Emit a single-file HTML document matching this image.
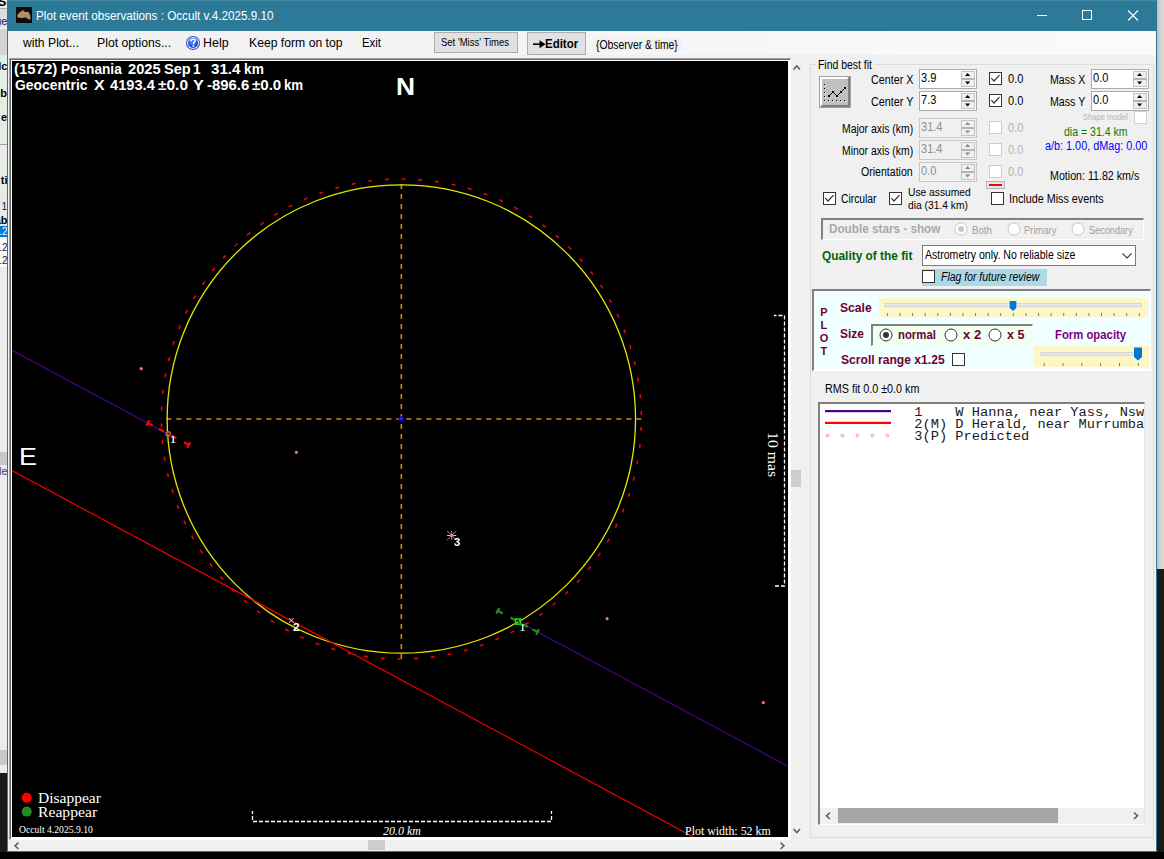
<!DOCTYPE html><html><head><meta charset="utf-8"><style>
html,body{margin:0;padding:0;width:1164px;height:859px;overflow:hidden;background:#111;position:relative}
div{box-sizing:border-box}
</style></head><body>
<div style="position:absolute;left:1157px;top:0px;width:7px;height:569px;background:linear-gradient(90deg,#bcb6b6 0px,#cecece 2px,#dadada 7px)"></div>
<div style="position:absolute;left:1157px;top:569px;width:7px;height:290px;background:#1a1a1a"></div>
<div style="position:absolute;left:0;top:0;width:7px;height:859px;overflow:hidden;background:#ececec">
<div style="position:absolute;left:0px;top:0px;width:7px;height:8px;background:#e8eee8"></div>
<div style="position:absolute;left:0px;top:8px;width:7px;height:1px;background:#a8a8a8"></div>
<div style="position:absolute;left:0px;top:9px;width:7px;height:18px;background:#dedede"></div>
<div style="position:absolute;left:0px;top:29px;width:7px;height:26px;background:#d4d4d4"></div>
<div style="position:absolute;left:0px;top:55px;width:7px;height:89px;background:#e4ece4"></div>
<div style="position:absolute;left:0px;top:144px;width:7px;height:1px;background:#a0a0a0"></div>
<div style="position:absolute;left:0px;top:158px;width:7px;height:35px;background:#e4ece4"></div>
<div style="position:absolute;left:0px;top:193px;width:7px;height:34px;background:#e8e8e8"></div>
<div style="position:absolute;left:0px;top:226px;width:7px;height:11px;background:#0078d7"></div>
<div style="position:absolute;left:0px;top:237px;width:7px;height:30px;background:#fafafa"></div>
<div style="position:absolute;left:0px;top:452px;width:7px;height:13px;background:#c8c8c8"></div>
<div style="position:absolute;left:0px;top:750px;width:7px;height:15px;background:#c8c8c8"></div>
<div style="position:absolute;left:0px;top:773px;width:7px;height:86px;background:#1a1a1a"></div>
<div style="position:absolute;right:0.5px;top:-5px;font:bold 13px/1 'Liberation Sans',sans-serif;color:#000;white-space:pre">S</div>
<div style="position:absolute;right:-0.5px;top:16px;font:normal 11px/1 'Liberation Sans',sans-serif;color:#1a2050;white-space:pre">ue</div>
<div style="position:absolute;right:-0.5px;top:61px;font:bold 11px/1 'Liberation Sans',sans-serif;color:#000;white-space:pre">lc</div>
<div style="position:absolute;right:0px;top:88px;font:bold 11px/1 'Liberation Sans',sans-serif;color:#000;white-space:pre">b</div>
<div style="position:absolute;right:0px;top:112px;font:bold 11px/1 'Liberation Sans',sans-serif;color:#000;white-space:pre">e</div>
<div style="position:absolute;right:-0.5px;top:175px;font:bold 11px/1 'Liberation Sans',sans-serif;color:#000;white-space:pre">ti</div>
<div style="position:absolute;right:0px;top:202px;font:normal 10px/1 'Liberation Sans',sans-serif;color:#1a2050;white-space:pre">1</div>
<div style="position:absolute;right:-0.5px;top:215px;font:bold 11px/1 'Liberation Sans',sans-serif;color:#000;white-space:pre">ab</div>
<div style="position:absolute;right:-0.5px;top:227px;font:normal 10px/1 'Liberation Sans',sans-serif;color:#fff;white-space:pre">.2</div>
<div style="position:absolute;right:-0.5px;top:243px;font:normal 10px/1 'Liberation Sans',sans-serif;color:#1a2050;white-space:pre">.2</div>
<div style="position:absolute;right:-0.5px;top:256px;font:normal 10px/1 'Liberation Sans',sans-serif;color:#1a2050;white-space:pre">.2</div>
<div style="position:absolute;right:-0.5px;top:466px;font:normal 11px/1 'Liberation Sans',sans-serif;color:#404060;white-space:pre">le</div>
</div>
<div style="position:absolute;left:0px;top:852px;width:1164px;height:7px;background:#000"></div>
<div style="position:absolute;left:7px;top:0px;width:1150px;height:852px;background:#f0f0f0;border:1px solid #2e7a98;border-top:none"></div>
<div style="position:absolute;left:7px;top:0px;width:1150px;height:31px;background:#2d7a98"></div>
<div style="position:absolute;left:7px;top:0px;width:1150px;height:1px;background:#4489a3"></div>
<svg style="position:absolute;left:16px;top:7px" width="16" height="16" viewBox="0 0 16 16">
<rect width="16" height="16" fill="#0e0c08"/>
<path d="M1.1 9.1 C1.5 7 3.5 5 5.5 4.2 C6 3.4 7.2 3.0 7.8 3.8 C8.3 4.6 8.8 5.2 9.3 5.1 C10 4.6 11 4.4 12 5 C13.3 5.8 14.3 8 14.5 10.5 C14.6 12 14.2 12.8 13.6 12.7 C12.6 12.5 11.4 11.5 10.3 10.8 C9.4 10.4 8.2 10.6 6.8 10.9 C5 11.2 3.2 11.1 2.2 10.6 C1.4 10.2 1.0 9.7 1.1 9.1 Z" fill="#b09068"/>
</svg>
<div style="position:absolute;left:36.03px;top:10.00px;font:normal normal 12px/1 'Liberation Sans',sans-serif;color:#fff;white-space:pre;transform:scaleX(0.9734);transform-origin:0 0;">Plot event observations : Occult v.4.2025.9.10</div>
<svg style="position:absolute;left:1030px;top:5px" width="120" height="22" viewBox="1030 5 120 22">
<line x1="1037" y1="15.5" x2="1047" y2="15.5" stroke="#fff" stroke-width="1"/>
<rect x="1082.5" y="10.5" width="9" height="9" fill="none" stroke="#fff" stroke-width="1"/>
<path d="M1128 10.5 L1138 20.5 M1138 10.5 L1128 20.5" stroke="#fff" stroke-width="1.1"/>
</svg>
<div style="position:absolute;left:8px;top:31px;width:1148px;height:24px;background:linear-gradient(90deg,#f0f0f0 0%,#f4f4f4 40%,#fafafa 100%)"></div>
<div style="position:absolute;left:23.00px;top:37.00px;font:normal normal 12px/1 'Liberation Sans',sans-serif;color:#000;white-space:pre;transform:scaleX(1.0138);transform-origin:0 0;">with Plot...</div>
<div style="position:absolute;left:96.98px;top:37.00px;font:normal normal 12px/1 'Liberation Sans',sans-serif;color:#000;white-space:pre;transform:scaleX(1.0195);transform-origin:0 0;">Plot options...</div>
<svg style="position:absolute;left:185px;top:35px" width="16" height="16" viewBox="0 0 16 16">
<defs><radialGradient id="hg" cx="0.4" cy="0.35" r="0.7"><stop offset="0" stop-color="#5a8cff"/><stop offset="1" stop-color="#0a3cc8"/></radialGradient></defs>
<circle cx="8" cy="8" r="7" fill="#2a56c0"/>
<circle cx="8" cy="8" r="6" fill="#dfe8ff"/>
<circle cx="8" cy="8" r="5" fill="url(#hg)"/>
<path d="M5.9 6.2 C5.9 4.6 7.2 4.2 8.2 4.2 C9.6 4.2 10.3 5.2 10.1 6.2 C9.9 7.3 8.5 7.6 8.4 9.2" fill="none" stroke="#fff" stroke-width="1.5"/>
<rect x="7.6" y="10.2" width="1.6" height="1.6" fill="#fff"/>
</svg>
<div style="position:absolute;left:203.46px;top:37.00px;font:normal normal 12px/1 'Liberation Sans',sans-serif;color:#000;white-space:pre;transform:scaleX(1.0350);transform-origin:0 0;">Help</div>
<div style="position:absolute;left:249.48px;top:37.00px;font:normal normal 12px/1 'Liberation Sans',sans-serif;color:#000;white-space:pre;transform:scaleX(1.0159);transform-origin:0 0;">Keep form on top</div>
<div style="position:absolute;left:361.55px;top:37.00px;font:normal normal 12px/1 'Liberation Sans',sans-serif;color:#000;white-space:pre;transform:scaleX(0.9505);transform-origin:0 0;">Exit</div>
<div style="position:absolute;left:434px;top:32px;width:84px;height:21px;background:#e1e1e1;border:1px solid #adadad"></div>
<div style="position:absolute;left:440.67px;top:37.00px;font:normal normal 11px/1 'Liberation Sans',sans-serif;color:#000;white-space:pre;transform:scaleX(0.8629);transform-origin:0 0;">Set 'Miss' Times</div>
<div style="position:absolute;left:527px;top:32px;width:59px;height:23px;background:#e1e1e1;border:1px solid #adadad"></div>
<div style="position:absolute;left:545.23px;top:37.00px;font:normal bold 13px/1 'Liberation Sans',sans-serif;color:#000;white-space:pre;transform:scaleX(0.8822);transform-origin:0 0;">Editor</div>
<svg style="position:absolute;left:530px;top:38px" width="18" height="12" viewBox="530 38 18 12"><path d="M533 44.2 H542" stroke="#000" stroke-width="1.6"/><path d="M539.5 40.2 L545.5 44.2 L539.5 48.2 Z" fill="#000"/></svg>
<div style="position:absolute;left:593px;top:38px;width:89px;height:13px;background:#f1f1f1"></div>
<div style="position:absolute;left:596.44px;top:39.00px;font:normal normal 12px/1 'Liberation Sans',sans-serif;color:#000;white-space:pre;transform:scaleX(0.8641);transform-origin:0 0;">{Observer &amp; time}</div>
<div style="position:absolute;left:9px;top:58px;width:782px;height:782px;background:#fff;border-top:1px solid #a0a0a0;border-left:1px solid #a0a0a0"></div>
<div style="position:absolute;left:10px;top:59px;width:780px;height:780px;border-top:1px solid #696969;border-left:1px solid #696969"></div>
<div style="position:absolute;left:12px;top:61px;width:776px;height:776px;background:#000"></div>
<svg style="position:absolute;left:12px;top:61px" width="776" height="776" viewBox="12 61 776 776"><line x1="641.3" y1="419.0" x2="161" y2="419.0" stroke="#d18a0c" stroke-width="1.6" stroke-dasharray="5 5"/><line x1="401.35" y1="659" x2="401.35" y2="179" stroke="#d18a0c" stroke-width="1.6" stroke-dasharray="5 5"/><circle cx="401.35" cy="419.0" r="240.0" fill="none" stroke="#f00000" stroke-width="1.6" stroke-dasharray="4 12.755" transform="rotate(1.94 401.35 419.0)"/><circle cx="401.35" cy="419.0" r="234.2" fill="none" stroke="#e6e600" stroke-width="1.3"/><circle cx="401.35" cy="419.0" r="1.9" fill="none" stroke="#0000ff" stroke-width="1.8"/><line x1="12" y1="350.3" x2="168" y2="434" stroke="#4e0092" stroke-width="1.15"/><line x1="518" y1="621.5" x2="788" y2="766.3" stroke="#4e0092" stroke-width="1.15"/><line x1="12" y1="470.6" x2="693.4" y2="837" stroke="#f00000" stroke-width="1.2"/><circle cx="141.2" cy="368.7" r="1.6" fill="#f068b4"/><circle cx="296.4" cy="452.3" r="1.6" fill="#f068b4"/><circle cx="607.1" cy="618.7" r="1.6" fill="#f068b4"/><circle cx="763.3" cy="702.6" r="1.6" fill="#f068b4"/><line x1="158.60" y1="428.76" x2="163.79" y2="431.54" stroke="#ff0000" stroke-width="2.3"/><line x1="171.37" y1="435.60" x2="176.39" y2="438.29" stroke="#ff0000" stroke-width="2.3"/><line x1="147.76" y1="422.95" x2="152.69" y2="425.59" stroke="#ff0000" stroke-width="2.3"/><line x1="149.22" y1="420.22" x2="146.30" y2="425.68" stroke="#ff0000" stroke-width="2.3"/><line x1="188.82" y1="444.94" x2="183.88" y2="442.30" stroke="#ff0000" stroke-width="2.3"/><line x1="190.28" y1="442.21" x2="187.35" y2="447.68" stroke="#ff0000" stroke-width="2.3"/><circle cx="168.2" cy="433.9" r="2.2" fill="none" stroke="#be5a3c" stroke-width="1.4"/><line x1="510.51" y1="617.59" x2="515.80" y2="620.42" stroke="#228b22" stroke-width="2.3"/><line x1="523.11" y1="624.34" x2="528.04" y2="626.98" stroke="#228b22" stroke-width="2.3"/><line x1="497.83" y1="610.79" x2="502.76" y2="613.43" stroke="#228b22" stroke-width="2.3"/><line x1="499.29" y1="608.06" x2="496.36" y2="613.52" stroke="#228b22" stroke-width="2.3"/><line x1="537.56" y1="632.08" x2="532.62" y2="629.44" stroke="#228b22" stroke-width="2.3"/><line x1="539.02" y1="629.35" x2="536.09" y2="634.81" stroke="#228b22" stroke-width="2.3"/><rect x="515.5" y="619.1" width="5" height="5" fill="none" stroke="#00f000" stroke-width="1.6"/><path d="M289.1 618.1 L293.7 622.7 M293.7 618.1 L289.1 622.7" stroke="#a8a8b8" stroke-width="1.1"/><path d="M447.09999999999997 530.9 L456.3 540.1 M456.3 530.9 L447.09999999999997 540.1 M451.7 530.9 V540.1" stroke="#8a8a90" stroke-width="1"/><path d="M447.09999999999997 535.5 H456.3" stroke="#c8c8d0" stroke-width="1"/><circle cx="451.7" cy="535.5" r="1.8" fill="#f070b0"/><path d="M774 315.5 H784.5 V586 H774" fill="none" stroke="#fff" stroke-width="1.3" stroke-dasharray="4 2" stroke-dashoffset="1.5"/><path d="M252.5 811 V821.5 H551.5 V811" fill="none" stroke="#fff" stroke-width="1.3" stroke-dasharray="4 2" stroke-dashoffset="1"/><circle cx="26.7" cy="797.7" r="5" fill="#ff0000"/><circle cx="26.7" cy="811.6" r="5" fill="#228b22"/></svg>
<div style="position:absolute;left:14.46px;top:62.00px;font:normal bold 14px/1 'Liberation Sans',sans-serif;color:#fff;white-space:pre;transform:scaleX(1.0709);transform-origin:0 0;">(1572)</div>
<div style="position:absolute;left:60.69px;top:62.00px;font:normal bold 14px/1 'Liberation Sans',sans-serif;color:#fff;white-space:pre;transform:scaleX(0.9760);transform-origin:0 0;">Posnania</div>
<div style="position:absolute;left:128.08px;top:62.00px;font:normal bold 14px/1 'Liberation Sans',sans-serif;color:#fff;white-space:pre;transform:scaleX(1.0446);transform-origin:0 0;">2025</div>
<div style="position:absolute;left:163.61px;top:62.00px;font:normal bold 14px/1 'Liberation Sans',sans-serif;color:#fff;white-space:pre;transform:scaleX(1.0424);transform-origin:0 0;">Sep</div>
<div style="position:absolute;left:193.44px;top:62.00px;font:normal bold 14px/1 'Liberation Sans',sans-serif;color:#fff;white-space:pre;transform:scaleX(0.9846);transform-origin:0 0;">1</div>
<div style="position:absolute;left:211.36px;top:62.00px;font:normal bold 14px/1 'Liberation Sans',sans-serif;color:#fff;white-space:pre;transform:scaleX(1.0816);transform-origin:0 0;">31.4</div>
<div style="position:absolute;left:244.22px;top:62.00px;font:normal bold 14px/1 'Liberation Sans',sans-serif;color:#fff;white-space:pre;transform:scaleX(0.9796);transform-origin:0 0;">km</div>
<div style="position:absolute;left:15.34px;top:78.00px;font:normal bold 14px/1 'Liberation Sans',sans-serif;color:#fff;white-space:pre;transform:scaleX(0.9905);transform-origin:0 0;">Geocentric</div>
<div style="position:absolute;left:93.66px;top:78.00px;font:normal bold 14px/1 'Liberation Sans',sans-serif;color:#fff;white-space:pre;transform:scaleX(1.1366);transform-origin:0 0;">X</div>
<div style="position:absolute;left:109.70px;top:78.00px;font:normal bold 14px/1 'Liberation Sans',sans-serif;color:#fff;white-space:pre;transform:scaleX(1.0455);transform-origin:0 0;">4193.4</div>
<div style="position:absolute;left:157.85px;top:78.00px;font:normal bold 14px/1 'Liberation Sans',sans-serif;color:#fff;white-space:pre;transform:scaleX(1.1048);transform-origin:0 0;">±0.0</div>
<div style="position:absolute;left:193.41px;top:78.00px;font:normal bold 14px/1 'Liberation Sans',sans-serif;color:#fff;white-space:pre;transform:scaleX(1.1606);transform-origin:0 0;">Y</div>
<div style="position:absolute;left:206.60px;top:78.00px;font:normal bold 14px/1 'Liberation Sans',sans-serif;color:#fff;white-space:pre;transform:scaleX(1.0649);transform-origin:0 0;">-896.6</div>
<div style="position:absolute;left:251.96px;top:78.00px;font:normal bold 14px/1 'Liberation Sans',sans-serif;color:#fff;white-space:pre;transform:scaleX(1.0781);transform-origin:0 0;">±0.0</div>
<div style="position:absolute;left:283.55px;top:78.00px;font:normal bold 14px/1 'Liberation Sans',sans-serif;color:#fff;white-space:pre;transform:scaleX(0.9469);transform-origin:0 0;">km</div>
<div style="position:absolute;left:395.62px;top:75.00px;font:normal bold 24px/1 'Liberation Sans',sans-serif;color:#fff;white-space:pre;transform:scaleX(1.0973);transform-origin:0 0;">N</div>
<div style="position:absolute;left:19.22px;top:445.00px;font:normal normal 24px/1 'Liberation Sans',sans-serif;color:#fff;white-space:pre;transform:scaleX(1.1254);transform-origin:0 0;">E</div>
<div style="position:absolute;left:168.85px;top:436.00px;font:normal normal 9.5px/1 'Liberation Serif',sans-serif;color:#fff;white-space:pre;transform:scaleX(1.6593);transform-origin:0 0;">1</div>
<div style="position:absolute;left:519.00px;top:624.00px;font:normal normal 9.5px/1 'Liberation Serif',sans-serif;color:#fff;white-space:pre;transform:scaleX(1.4815);transform-origin:0 0;">1</div>
<div style="position:absolute;left:292.83px;top:623.00px;font:normal bold 10px/1 'Liberation Sans',sans-serif;color:#fff;white-space:pre;transform:scaleX(1.1692);transform-origin:0 0;">2</div>
<div style="position:absolute;left:453.62px;top:538.00px;font:normal bold 10px/1 'Liberation Sans',sans-serif;color:#fff;white-space:pre;transform:scaleX(1.1139);transform-origin:0 0;">3</div>
<div style="position:absolute;left:37.55px;top:791.00px;font:normal normal 15px/1 'Liberation Serif',sans-serif;color:#fff;white-space:pre;transform:scaleX(1.0340);transform-origin:0 0;">Disappear</div>
<div style="position:absolute;left:37.54px;top:805.00px;font:normal normal 15px/1 'Liberation Serif',sans-serif;color:#fff;white-space:pre;transform:scaleX(1.0435);transform-origin:0 0;">Reappear</div>
<div style="position:absolute;left:18.84px;top:825.00px;font:normal normal 10px/1 'Liberation Serif',sans-serif;color:#fff;white-space:pre;transform:scaleX(0.9621);transform-origin:0 0;">Occult 4.2025.9.10</div>
<div style="position:absolute;left:685.26px;top:824.00px;font:normal normal 13px/1 'Liberation Serif',sans-serif;color:#fff;white-space:pre;transform:scaleX(0.9172);transform-origin:0 0;">Plot width: 52 km</div>
<div style="position:absolute;left:383.20px;top:824.00px;font:italic normal 13px/1 'Liberation Serif',sans-serif;color:#fff;white-space:pre;transform:scaleX(0.9196);transform-origin:0 0;">20.0 km</div>
<div style="position:absolute;left:780px;top:432.3px;transform:rotate(90deg) scaleX(1.09);transform-origin:0 0;font:14.5px/1 'Liberation Serif',serif;color:#fff;white-space:pre">10 mas</div>
<div style="position:absolute;left:791px;top:61px;width:19px;height:779px;background:#f0f0f0"></div>
<svg style="position:absolute;left:790px;top:61px" width="20" height="790" viewBox="790 61 20 790">
<path d="M793.5 69.5 L796.8 66 L800 69.5" fill="none" stroke="#606060" stroke-width="1.6"/>
<path d="M793.5 829 L796.8 832.5 L800 829" fill="none" stroke="#606060" stroke-width="1.6"/>
</svg>
<div style="position:absolute;left:791px;top:470px;width:10px;height:17px;background:#cdcdcd"></div>
<div style="position:absolute;left:12px;top:840px;width:778px;height:10px;background:#f0f0f0"></div>
<svg style="position:absolute;left:8px;top:838px" width="790" height="14" viewBox="8 838 790 14">
<path d="M18.5 842.5 L15 845.8 L18.5 849" fill="none" stroke="#606060" stroke-width="1.6"/>
<path d="M780.5 842.5 L784 845.8 L780.5 849" fill="none" stroke="#606060" stroke-width="1.6"/>
</svg>
<div style="position:absolute;left:368px;top:840px;width:17px;height:10px;background:#cdcdcd"></div>
<div style="position:absolute;left:810px;top:64px;width:344px;height:774px;border:1px solid #dcdcdc"></div>
<div style="position:absolute;left:816px;top:58px;width:60px;height:10px;background:#f0f0f0"></div>
<div style="position:absolute;left:818.33px;top:59.00px;font:normal normal 12px/1 'Liberation Sans',sans-serif;color:#000;white-space:pre;transform:scaleX(0.8697);transform-origin:0 0;">Find best fit</div>
<svg style="position:absolute;left:819px;top:76px" width="32" height="32" viewBox="819 76 32 32">
<rect x="819" y="76" width="32" height="32" fill="#a0a0a0"/>
<rect x="820" y="77" width="30" height="30" fill="#808080"/>
<path d="M820 77 H849 L847 79 H822 V105 L820 107 Z" fill="#fff"/>
<rect x="822" y="79" width="26" height="26" fill="#c0c0c0"/>
<rect x="824" y="100" width="1" height="1" fill="#000"/><rect x="825" y="101" width="1" height="1" fill="#fff"/><rect x="828" y="100" width="1" height="1" fill="#000"/><rect x="829" y="101" width="1" height="1" fill="#fff"/><rect x="832" y="100" width="1" height="1" fill="#000"/><rect x="833" y="101" width="1" height="1" fill="#fff"/><rect x="836" y="100" width="1" height="1" fill="#000"/><rect x="837" y="101" width="1" height="1" fill="#fff"/><rect x="840" y="100" width="1" height="1" fill="#000"/><rect x="841" y="101" width="1" height="1" fill="#fff"/><rect x="844" y="100" width="1" height="1" fill="#000"/><rect x="845" y="101" width="1" height="1" fill="#fff"/><rect x="824" y="84" width="1" height="1" fill="#000"/><rect x="825" y="85" width="1" height="1" fill="#fff"/><rect x="824" y="88" width="1" height="1" fill="#000"/><rect x="825" y="89" width="1" height="1" fill="#fff"/><rect x="824" y="92" width="1" height="1" fill="#000"/><rect x="825" y="93" width="1" height="1" fill="#fff"/><rect x="824" y="96" width="1" height="1" fill="#000"/><rect x="825" y="97" width="1" height="1" fill="#fff"/><polyline points="829,96 833,92 837,96 841,92 845,88" fill="none" stroke="#000" stroke-width="1"/>
<rect x="828" y="95" width="2" height="2"/><rect x="832" y="91" width="2" height="2"/><rect x="836" y="95" width="2" height="2"/><rect x="840" y="91" width="2" height="2"/><rect x="844" y="87" width="2" height="2"/>
</svg>
<div style="position:absolute;left:871.04px;top:74.00px;font:normal normal 12px/1 'Liberation Sans',sans-serif;color:#000;white-space:pre;transform:scaleX(0.8946);transform-origin:0 0;">Center X</div>
<div style="position:absolute;left:919px;top:69px;width:58px;height:20px;background:#fff;border:1px solid #acacac"></div>
<svg style="position:absolute;left:961px;top:71px" width="14" height="16" viewBox="0 0 14 16"><rect x="0.5" y="0.5" width="13" height="15" fill="#f0f0f0" stroke="#c4c4c4"/><rect x="0.5" y="7" width="13" height="2" fill="#b4b4b4"/><path d="M4 5 L6.6 2 L9.2 5 Z" fill="#000"/><path d="M4 10.5 L6.6 13.5 L9.2 10.5 Z" fill="#000"/></svg>
<div style="position:absolute;left:920.80px;top:72.00px;font:normal normal 12px/1 'Liberation Sans',sans-serif;color:#000;white-space:pre;transform:scaleX(0.9200);transform-origin:0 0;">3.9</div>
<div style="position:absolute;left:871.04px;top:96.00px;font:normal normal 12px/1 'Liberation Sans',sans-serif;color:#000;white-space:pre;transform:scaleX(0.8995);transform-origin:0 0;">Center Y</div>
<div style="position:absolute;left:919px;top:91px;width:58px;height:20px;background:#fff;border:1px solid #acacac"></div>
<svg style="position:absolute;left:961px;top:93px" width="14" height="16" viewBox="0 0 14 16"><rect x="0.5" y="0.5" width="13" height="15" fill="#f0f0f0" stroke="#c4c4c4"/><rect x="0.5" y="7" width="13" height="2" fill="#b4b4b4"/><path d="M4 5 L6.6 2 L9.2 5 Z" fill="#000"/><path d="M4 10.5 L6.6 13.5 L9.2 10.5 Z" fill="#000"/></svg>
<div style="position:absolute;left:920.62px;top:94.00px;font:normal normal 12px/1 'Liberation Sans',sans-serif;color:#000;white-space:pre;transform:scaleX(0.9200);transform-origin:0 0;">7.3</div>
<div style="position:absolute;left:989px;top:72px;width:13px;height:13px;border:1px solid #333;background:#fff"></div>
<svg style="position:absolute;left:989px;top:72px" width="13" height="13" viewBox="0 0 13 13"><polyline points="2.3,6.1 5,9 10.5,3.1" fill="none" stroke="#333" stroke-width="1.2"/></svg>
<div style="position:absolute;left:1007.70px;top:73.00px;font:normal normal 12px/1 'Liberation Sans',sans-serif;color:#000;white-space:pre;transform:scaleX(0.9206);transform-origin:0 0;">0.0</div>
<div style="position:absolute;left:989px;top:94px;width:13px;height:13px;border:1px solid #333;background:#fff"></div>
<svg style="position:absolute;left:989px;top:94px" width="13" height="13" viewBox="0 0 13 13"><polyline points="2.3,6.1 5,9 10.5,3.1" fill="none" stroke="#333" stroke-width="1.2"/></svg>
<div style="position:absolute;left:1007.70px;top:95.00px;font:normal normal 12px/1 'Liberation Sans',sans-serif;color:#000;white-space:pre;transform:scaleX(0.9206);transform-origin:0 0;">0.0</div>
<div style="position:absolute;left:1049.62px;top:74.00px;font:normal normal 12px/1 'Liberation Sans',sans-serif;color:#000;white-space:pre;transform:scaleX(0.8826);transform-origin:0 0;">Mass X</div>
<div style="position:absolute;left:1091px;top:69px;width:58px;height:20px;background:#fff;border:1px solid #acacac"></div>
<svg style="position:absolute;left:1133px;top:71px" width="14" height="16" viewBox="0 0 14 16"><rect x="0.5" y="0.5" width="13" height="15" fill="#f0f0f0" stroke="#c4c4c4"/><rect x="0.5" y="7" width="13" height="2" fill="#b4b4b4"/><path d="M4 5 L6.6 2 L9.2 5 Z" fill="#000"/><path d="M4 10.5 L6.6 13.5 L9.2 10.5 Z" fill="#000"/></svg>
<div style="position:absolute;left:1092.80px;top:72.00px;font:normal normal 12px/1 'Liberation Sans',sans-serif;color:#000;white-space:pre;transform:scaleX(0.9200);transform-origin:0 0;">0.0</div>
<div style="position:absolute;left:1049.61px;top:96.00px;font:normal normal 12px/1 'Liberation Sans',sans-serif;color:#000;white-space:pre;transform:scaleX(0.8869);transform-origin:0 0;">Mass Y</div>
<div style="position:absolute;left:1091px;top:91px;width:58px;height:20px;background:#fff;border:1px solid #acacac"></div>
<svg style="position:absolute;left:1133px;top:93px" width="14" height="16" viewBox="0 0 14 16"><rect x="0.5" y="0.5" width="13" height="15" fill="#f0f0f0" stroke="#c4c4c4"/><rect x="0.5" y="7" width="13" height="2" fill="#b4b4b4"/><path d="M4 5 L6.6 2 L9.2 5 Z" fill="#000"/><path d="M4 10.5 L6.6 13.5 L9.2 10.5 Z" fill="#000"/></svg>
<div style="position:absolute;left:1092.80px;top:94.00px;font:normal normal 12px/1 'Liberation Sans',sans-serif;color:#000;white-space:pre;transform:scaleX(0.9200);transform-origin:0 0;">0.0</div>
<div style="position:absolute;left:1082.67px;top:113.00px;font:normal normal 8.6px/1 'Liberation Sans',sans-serif;color:#b4b4b4;white-space:pre;transform:scaleX(0.8811);transform-origin:0 0;">Shape model</div>
<div style="position:absolute;left:1134px;top:111px;width:13px;height:13px;border:1px solid #d0d0d0;background:#fff"></div>
<div style="position:absolute;left:842.23px;top:123.00px;font:normal normal 12px/1 'Liberation Sans',sans-serif;color:#000;white-space:pre;transform:scaleX(0.8673);transform-origin:0 0;">Major axis (km)</div>
<div style="position:absolute;left:919px;top:118px;width:58px;height:20px;background:#f0f0f0;border:1px solid #c8c8c8"></div>
<svg style="position:absolute;left:961px;top:120px" width="14" height="16" viewBox="0 0 14 16"><rect x="0.5" y="0.5" width="13" height="15" fill="#f0f0f0" stroke="#c4c4c4"/><rect x="0.5" y="7" width="13" height="2" fill="#b4b4b4"/><path d="M4 5 L6.6 2 L9.2 5 Z" fill="#8a8a8a"/><path d="M4 10.5 L6.6 13.5 L9.2 10.5 Z" fill="#8a8a8a"/></svg>
<div style="position:absolute;left:920.80px;top:121.00px;font:normal normal 12px/1 'Liberation Sans',sans-serif;color:#8d8d8d;white-space:pre;transform:scaleX(0.9200);transform-origin:0 0;">31.4</div>
<div style="position:absolute;left:842.23px;top:145.00px;font:normal normal 12px/1 'Liberation Sans',sans-serif;color:#000;white-space:pre;transform:scaleX(0.8673);transform-origin:0 0;">Minor axis (km)</div>
<div style="position:absolute;left:919px;top:140px;width:58px;height:20px;background:#f0f0f0;border:1px solid #c8c8c8"></div>
<svg style="position:absolute;left:961px;top:142px" width="14" height="16" viewBox="0 0 14 16"><rect x="0.5" y="0.5" width="13" height="15" fill="#f0f0f0" stroke="#c4c4c4"/><rect x="0.5" y="7" width="13" height="2" fill="#b4b4b4"/><path d="M4 5 L6.6 2 L9.2 5 Z" fill="#8a8a8a"/><path d="M4 10.5 L6.6 13.5 L9.2 10.5 Z" fill="#8a8a8a"/></svg>
<div style="position:absolute;left:920.80px;top:143.00px;font:normal normal 12px/1 'Liberation Sans',sans-serif;color:#8d8d8d;white-space:pre;transform:scaleX(0.9200);transform-origin:0 0;">31.4</div>
<div style="position:absolute;left:861.20px;top:166.00px;font:normal normal 12px/1 'Liberation Sans',sans-serif;color:#000;white-space:pre;transform:scaleX(0.8811);transform-origin:0 0;">Orientation</div>
<div style="position:absolute;left:919px;top:162px;width:58px;height:20px;background:#f0f0f0;border:1px solid #c8c8c8"></div>
<svg style="position:absolute;left:961px;top:164px" width="14" height="16" viewBox="0 0 14 16"><rect x="0.5" y="0.5" width="13" height="15" fill="#f0f0f0" stroke="#c4c4c4"/><rect x="0.5" y="7" width="13" height="2" fill="#b4b4b4"/><path d="M4 5 L6.6 2 L9.2 5 Z" fill="#8a8a8a"/><path d="M4 10.5 L6.6 13.5 L9.2 10.5 Z" fill="#8a8a8a"/></svg>
<div style="position:absolute;left:920.80px;top:165.00px;font:normal normal 12px/1 'Liberation Sans',sans-serif;color:#8d8d8d;white-space:pre;transform:scaleX(0.9200);transform-origin:0 0;">0.0</div>
<div style="position:absolute;left:989px;top:121px;width:13px;height:13px;border:1px solid #cccccc;background:#fff"></div>
<div style="position:absolute;left:1007.70px;top:122.00px;font:normal normal 12px/1 'Liberation Sans',sans-serif;color:#b0b0b0;white-space:pre;transform:scaleX(0.9206);transform-origin:0 0;">0.0</div>
<div style="position:absolute;left:989px;top:143px;width:13px;height:13px;border:1px solid #cccccc;background:#fff"></div>
<div style="position:absolute;left:1007.70px;top:144.00px;font:normal normal 12px/1 'Liberation Sans',sans-serif;color:#b0b0b0;white-space:pre;transform:scaleX(0.9206);transform-origin:0 0;">0.0</div>
<div style="position:absolute;left:989px;top:165px;width:13px;height:13px;border:1px solid #cccccc;background:#fff"></div>
<div style="position:absolute;left:1007.70px;top:166.00px;font:normal normal 12px/1 'Liberation Sans',sans-serif;color:#b0b0b0;white-space:pre;transform:scaleX(0.9206);transform-origin:0 0;">0.0</div>
<div style="position:absolute;left:1064.46px;top:126.00px;font:normal normal 12px/1 'Liberation Sans',sans-serif;color:#008000;white-space:pre;transform:scaleX(0.8781);transform-origin:0 0;">dia = 31.4 km</div>
<div style="position:absolute;left:1045.45px;top:140.00px;font:normal normal 12px/1 'Liberation Sans',sans-serif;color:#0000ff;white-space:pre;transform:scaleX(0.9027);transform-origin:0 0;">a/b: 1.00, dMag: 0.00</div>
<div style="position:absolute;left:1049.51px;top:170.00px;font:normal normal 12px/1 'Liberation Sans',sans-serif;color:#000;white-space:pre;transform:scaleX(0.8883);transform-origin:0 0;">Motion: 11.82 km/s</div>
<div style="position:absolute;left:986px;top:181px;width:19px;height:8px;background:#e6e6e6;border:1px solid #b4b4b4"></div>
<div style="position:absolute;left:989px;top:184px;width:13px;height:2px;background:#ff0000"></div>
<div style="position:absolute;left:823px;top:192px;width:13px;height:13px;border:1px solid #333;background:#fff"></div>
<svg style="position:absolute;left:823px;top:192px" width="13" height="13" viewBox="0 0 13 13"><polyline points="2.3,6.1 5,9 10.5,3.1" fill="none" stroke="#333" stroke-width="1.2"/></svg>
<div style="position:absolute;left:841.06px;top:193.00px;font:normal normal 12px/1 'Liberation Sans',sans-serif;color:#000;white-space:pre;transform:scaleX(0.8593);transform-origin:0 0;">Circular</div>
<div style="position:absolute;left:889px;top:192px;width:13px;height:13px;border:1px solid #333;background:#fff"></div>
<svg style="position:absolute;left:889px;top:192px" width="13" height="13" viewBox="0 0 13 13"><polyline points="2.3,6.1 5,9 10.5,3.1" fill="none" stroke="#333" stroke-width="1.2"/></svg>
<div style="position:absolute;left:907.84px;top:187.00px;font:normal normal 11px/1 'Liberation Sans',sans-serif;color:#000;white-space:pre;transform:scaleX(0.9338);transform-origin:0 0;">Use assumed</div>
<div style="position:absolute;left:908.19px;top:200.00px;font:normal normal 11px/1 'Liberation Sans',sans-serif;color:#000;white-space:pre;transform:scaleX(0.9347);transform-origin:0 0;">dia (31.4 km)</div>
<div style="position:absolute;left:991px;top:192px;width:13px;height:13px;border:1px solid #333;background:#fff"></div>
<div style="position:absolute;left:1008.79px;top:193.00px;font:normal normal 12px/1 'Liberation Sans',sans-serif;color:#000;white-space:pre;transform:scaleX(0.8978);transform-origin:0 0;">Include Miss events</div>
<div style="position:absolute;left:821px;top:218px;width:323px;height:22px;background:#f0f0f0;border-top:2px solid #808080;border-left:2px solid #808080;border-bottom:1px solid #fff;border-right:1px solid #fff"></div>
<div style="position:absolute;left:828.91px;top:223.00px;font:normal bold 12px/1 'Liberation Sans',sans-serif;color:#a8a8a8;white-space:pre;transform:scaleX(0.9766);transform-origin:0 0;">Double stars - show</div>
<svg style="position:absolute;left:954.3px;top:222.4px" width="14" height="14" viewBox="0 0 14 14"><circle cx="7" cy="7" r="6" fill="#fff" stroke="#c8c8c8" stroke-width="1"/><circle cx="7" cy="7" r="3" fill="#c8c8c8"/></svg>
<div style="position:absolute;left:972.01px;top:226.00px;font:normal normal 10px/1 'Liberation Sans',sans-serif;color:#a0a0a0;white-space:pre;transform:scaleX(0.9673);transform-origin:0 0;">Both</div>
<svg style="position:absolute;left:1006.5px;top:222.4px" width="14" height="14" viewBox="0 0 14 14"><circle cx="7" cy="7" r="6" fill="#fff" stroke="#c8c8c8" stroke-width="1"/></svg>
<div style="position:absolute;left:1024.03px;top:226.00px;font:normal normal 10px/1 'Liberation Sans',sans-serif;color:#a0a0a0;white-space:pre;transform:scaleX(0.9428);transform-origin:0 0;">Primary</div>
<svg style="position:absolute;left:1071.4px;top:222.4px" width="14" height="14" viewBox="0 0 14 14"><circle cx="7" cy="7" r="6" fill="#fff" stroke="#c8c8c8" stroke-width="1"/></svg>
<div style="position:absolute;left:1089.40px;top:226.00px;font:normal normal 10px/1 'Liberation Sans',sans-serif;color:#a0a0a0;white-space:pre;transform:scaleX(0.9140);transform-origin:0 0;">Secondary</div>
<div style="position:absolute;left:821.51px;top:250.00px;font:normal bold 12px/1 'Liberation Sans',sans-serif;color:#006400;white-space:pre;transform:scaleX(0.9891);transform-origin:0 0;">Quality of the fit</div>
<div style="position:absolute;left:922px;top:245px;width:214px;height:21px;background:#fff;border:1px solid #7a7a7a"></div>
<div style="position:absolute;left:924.80px;top:249.00px;font:normal normal 12px/1 'Liberation Sans',sans-serif;color:#000;white-space:pre;transform:scaleX(0.8791);transform-origin:0 0;">Astrometry only. No reliable size</div>
<svg style="position:absolute;left:1120px;top:251px" width="14" height="10" viewBox="0 0 14 10"><polyline points="2.5,2.5 7,7 11.5,2.5" fill="none" stroke="#333" stroke-width="1.1"/></svg>
<div style="position:absolute;left:922px;top:269px;width:125px;height:17px;background:#add8e6"></div>
<div style="position:absolute;left:922px;top:270px;width:13px;height:13px;border:1px solid #333;background:#fff"></div>
<div style="position:absolute;left:941.47px;top:271.00px;font:italic normal 12px/1 'Liberation Sans',sans-serif;color:#000;white-space:pre;transform:scaleX(0.8717);transform-origin:0 0;">Flag for future review</div>
<div style="position:absolute;left:812px;top:289px;width:339px;height:82px;background:#f0ffff;border-top:2px solid #808080;border-left:2px solid #808080;border-bottom:1px solid #fff;border-right:1px solid #fff"></div>
<div style="position:absolute;left:820.15px;top:307.00px;font:normal bold 11px/1 'Liberation Sans',sans-serif;color:#6e0034;white-space:pre;">P</div>
<div style="position:absolute;left:820.45px;top:320.00px;font:normal bold 11px/1 'Liberation Sans',sans-serif;color:#6e0034;white-space:pre;">L</div>
<div style="position:absolute;left:819.76px;top:333.00px;font:normal bold 11px/1 'Liberation Sans',sans-serif;color:#6e0034;white-space:pre;">O</div>
<div style="position:absolute;left:820.48px;top:346.00px;font:normal bold 11px/1 'Liberation Sans',sans-serif;color:#6e0034;white-space:pre;">T</div>
<div style="position:absolute;left:840.22px;top:302.00px;font:normal bold 12px/1 'Liberation Sans',sans-serif;color:#6e0034;white-space:pre;transform:scaleX(1.0110);transform-origin:0 0;">Scale</div>
<div style="position:absolute;left:879px;top:298px;width:269px;height:19px;background:#fdf6c8"></div>
<div style="position:absolute;left:884px;top:303px;width:258px;height:4px;background:#e7e7e7;border:1px solid #d6d6d6"></div>
<svg style="position:absolute;left:879px;top:298px" width="269" height="19" viewBox="879 298 269 19"><rect x="886.90" y="313" width="1" height="3" fill="#787878"/><rect x="899.50" y="313" width="1" height="3" fill="#787878"/><rect x="912.09" y="313" width="1" height="3" fill="#787878"/><rect x="924.68" y="313" width="1" height="3" fill="#787878"/><rect x="937.28" y="313" width="1" height="3" fill="#787878"/><rect x="949.88" y="313" width="1" height="3" fill="#787878"/><rect x="962.47" y="313" width="1" height="3" fill="#787878"/><rect x="975.06" y="313" width="1" height="3" fill="#787878"/><rect x="987.66" y="313" width="1" height="3" fill="#787878"/><rect x="1000.25" y="313" width="1" height="3" fill="#787878"/><rect x="1012.85" y="313" width="1" height="3" fill="#787878"/><rect x="1025.44" y="313" width="1" height="3" fill="#787878"/><rect x="1038.04" y="313" width="1" height="3" fill="#787878"/><rect x="1050.63" y="313" width="1" height="3" fill="#787878"/><rect x="1063.23" y="313" width="1" height="3" fill="#787878"/><rect x="1075.83" y="313" width="1" height="3" fill="#787878"/><rect x="1088.42" y="313" width="1" height="3" fill="#787878"/><rect x="1101.01" y="313" width="1" height="3" fill="#787878"/><rect x="1113.61" y="313" width="1" height="3" fill="#787878"/><rect x="1126.20" y="313" width="1" height="3" fill="#787878"/><rect x="1138.80" y="313" width="1" height="3" fill="#787878"/><path d="M1009.7 301 H1016.3 V308 L1013 311 L1009.7 308 Z" fill="#0078d7"/></svg>
<div style="position:absolute;left:840.23px;top:328.00px;font:normal bold 12px/1 'Liberation Sans',sans-serif;color:#6e0034;white-space:pre;transform:scaleX(0.9919);transform-origin:0 0;">Size</div>
<div style="position:absolute;left:871px;top:324px;width:162px;height:22px;background:#f0fff0;border-top:2px solid #808080;border-left:2px solid #808080;border-bottom:1px solid #fff;border-right:1px solid #fff"></div>
<svg style="position:absolute;left:879.4px;top:327.5px" width="14" height="14" viewBox="0 0 14 14"><circle cx="7" cy="7" r="6" fill="#fff" stroke="#333" stroke-width="1"/><circle cx="7" cy="7" r="3" fill="#333"/></svg>
<div style="position:absolute;left:897.83px;top:329.00px;font:normal bold 12px/1 'Liberation Sans',sans-serif;color:#6e0034;white-space:pre;transform:scaleX(0.9459);transform-origin:0 0;">normal</div>
<svg style="position:absolute;left:943.5px;top:327.5px" width="14" height="14" viewBox="0 0 14 14"><circle cx="7" cy="7" r="6" fill="#fff" stroke="#333" stroke-width="1"/></svg>
<div style="position:absolute;left:962.56px;top:329.00px;font:normal bold 12px/1 'Liberation Sans',sans-serif;color:#6e0034;white-space:pre;transform:scaleX(1.0895);transform-origin:0 0;">x 2</div>
<svg style="position:absolute;left:987.5px;top:327.5px" width="14" height="14" viewBox="0 0 14 14"><circle cx="7" cy="7" r="6" fill="#fff" stroke="#333" stroke-width="1"/></svg>
<div style="position:absolute;left:1006.87px;top:329.00px;font:normal bold 12px/1 'Liberation Sans',sans-serif;color:#6e0034;white-space:pre;transform:scaleX(1.0462);transform-origin:0 0;">x 5</div>
<div style="position:absolute;left:1055.03px;top:329.00px;font:normal bold 12px/1 'Liberation Sans',sans-serif;color:#800080;white-space:pre;transform:scaleX(0.9436);transform-origin:0 0;">Form opacity</div>
<div style="position:absolute;left:1034px;top:346px;width:115px;height:21px;background:#fdf6c8"></div>
<div style="position:absolute;left:1040px;top:352px;width:102px;height:4px;background:#e7e7e7;border:1px solid #d6d6d6"></div>
<svg style="position:absolute;left:1034px;top:346px" width="115" height="21" viewBox="1034 346 115 21"><rect x="1043.70" y="363" width="1" height="3" fill="#787878"/><rect x="1062.52" y="363" width="1" height="3" fill="#787878"/><rect x="1081.34" y="363" width="1" height="3" fill="#787878"/><rect x="1100.16" y="363" width="1" height="3" fill="#787878"/><rect x="1118.98" y="363" width="1" height="3" fill="#787878"/><rect x="1137.80" y="363" width="1" height="3" fill="#787878"/><path d="M1134 347.5 H1142 V357 L1138 360.5 L1134 357 Z" fill="#0078d7"/></svg>
<div style="position:absolute;left:840.92px;top:354.00px;font:normal bold 12px/1 'Liberation Sans',sans-serif;color:#6e0034;white-space:pre;transform:scaleX(1.0092);transform-origin:0 0;">Scroll range x1.25</div>
<div style="position:absolute;left:952px;top:353px;width:13px;height:13px;border:1px solid #333;background:#fff"></div>
<div style="position:absolute;left:825.40px;top:383.00px;font:normal normal 12px/1 'Liberation Sans',sans-serif;color:#000;white-space:pre;transform:scaleX(0.8966);transform-origin:0 0;">RMS fit 0.0 ±0.0 km</div>
<div style="position:absolute;left:818px;top:402px;width:327px;height:423px;background:#fff;border-top:2px solid #808080;border-left:2px solid #808080;border-bottom:1px solid #fff;border-right:1px solid #e3e3e3"></div>
<svg style="position:absolute;left:820px;top:404px" width="100" height="40" viewBox="820 404 100 40">
<rect x="825" y="410" width="66" height="2.2" fill="#4b0090"/>
<rect x="825" y="421.8" width="66" height="2.2" fill="#ff0000"/>
<circle cx="827.40" cy="435.6" r="1.3" fill="none" stroke="#ff6ec0" stroke-width="0.9"/><circle cx="842.40" cy="435.6" r="1.3" fill="none" stroke="#ff6ec0" stroke-width="0.9"/><circle cx="857.40" cy="435.6" r="1.3" fill="none" stroke="#ff6ec0" stroke-width="0.9"/><circle cx="872.40" cy="435.6" r="1.3" fill="none" stroke="#ff6ec0" stroke-width="0.9"/><circle cx="887.40" cy="435.6" r="1.3" fill="none" stroke="#ff6ec0" stroke-width="0.9"/></svg>
<div style="position:absolute;left:820px;top:404px;width:324px;height:40px;overflow:hidden">
<div style="position:absolute;left:94.30px;top:1.90px;font:13.7px/1 'Liberation Mono',monospace;color:#1a1a1a;white-space:pre">1    W Hanna, near Yass, Nsw</div>
<div style="position:absolute;left:94.30px;top:13.90px;font:13.7px/1 'Liberation Mono',monospace;color:#1a1a1a;white-space:pre">2(M) D Herald, near Murrumba</div>
<div style="position:absolute;left:94.30px;top:25.90px;font:13.7px/1 'Liberation Mono',monospace;color:#1a1a1a;white-space:pre">3(P) Predicted</div>
</div>
<div style="position:absolute;left:820px;top:808px;width:324px;height:16px;background:#f0f0f0"></div>
<div style="position:absolute;left:837.5px;top:808px;width:220.5px;height:15px;background:#a6a6a6"></div>
<svg style="position:absolute;left:820px;top:808px" width="324" height="16" viewBox="820 808 324 16">
<path d="M830 812.5 L826.5 815.8 L830 819" fill="none" stroke="#606060" stroke-width="1.6"/>
<path d="M1134 812.5 L1137.5 815.8 L1134 819" fill="none" stroke="#606060" stroke-width="1.6"/>
</svg>
</body></html>
